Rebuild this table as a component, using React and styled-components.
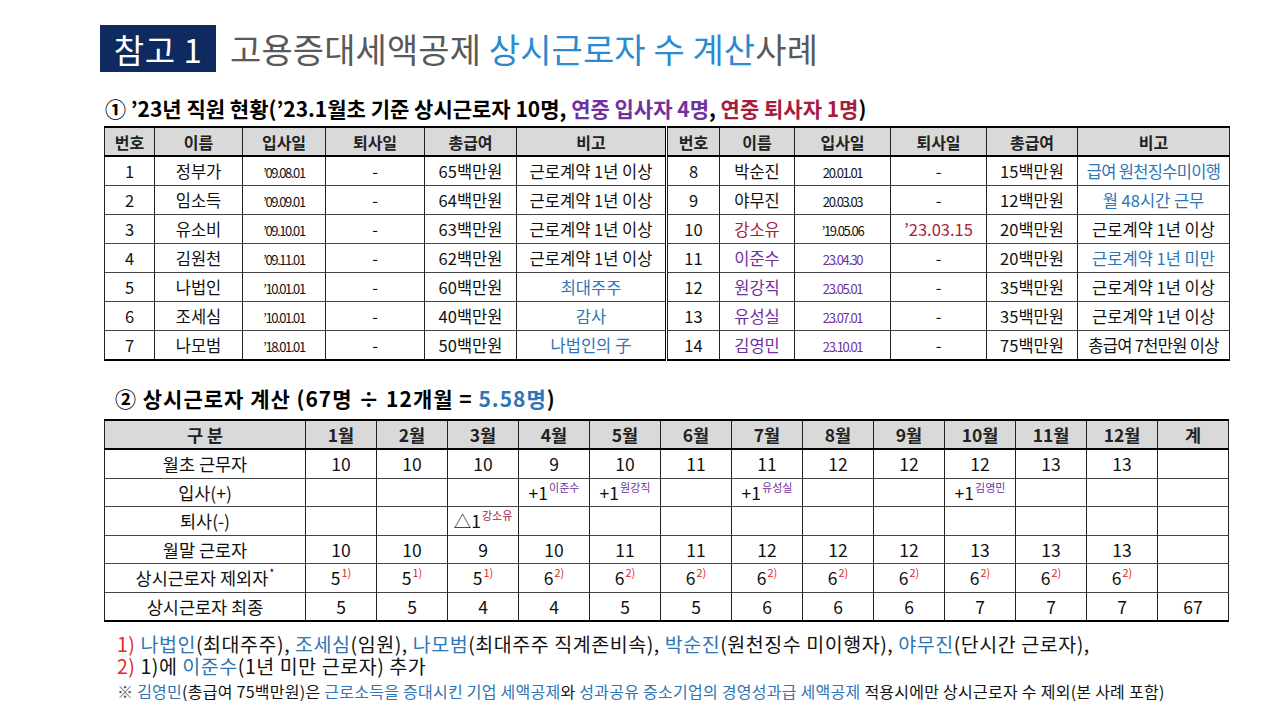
import React from 'react';
import styled, { createGlobalStyle } from 'styled-components';

const GlobalStyle = createGlobalStyle`
  html, body {
    margin: 0;
    padding: 0;
    background: #fff;
  }
  body {
    font-family: "Noto Sans CJK KR", "Noto Sans", sans-serif;
    color: #111;
  }
`;

const tones = {
  ink: '#111',
  gray: '#595959',
  sky: '#2b8ad0',
  blue: '#2e75b6',
  purple: '#7030a0',
  crimson: '#a61c3c',
  red: '#e3262b',
};

const Page = styled.div`
  width: 1280px;
  height: 720px;
  box-sizing: border-box;
  padding: 25px 0 0 100px;
  overflow: hidden;
`;

const TitleRow = styled.div`
  display: flex;
  align-items: center;
  gap: 14px;
  height: 47px;
`;

const TitleBadge = styled.div`
  width: 116px;
  height: 47px;
  display: flex;
  align-items: center;
  justify-content: center;
  background: #0e2a5f;
  color: #fff;
  font-size: 33px;
  letter-spacing: 0.5px;
`;

const TitleText = styled.h1`
  margin: 0;
  font-size: 34px;
  font-weight: 400;
  letter-spacing: 0.1px;
  color: ${tones.gray};
`;

const Tone = styled.span`
  color: ${p => tones[p.$c] || p.$c};
`;

const Heading = styled.h2`
  margin: ${p => p.$mt}px 0 0 ${p => p.$ml}px;
  font-size: 21px;
  font-weight: 700;
  line-height: 24px;
  color: #000;
  letter-spacing: ${p => p.$ls || 0}px;
`;

const TablePair = styled.div`
  display: flex;
  gap: 1px;
  margin: 6px 0 0 4px;
`;

const Sheet = styled.table`
  border-collapse: collapse;
  table-layout: fixed;
  width: ${p => p.$w}px;
  border-top: 2.5px solid #000;
  border-bottom: 2.5px solid #000;
  border-left: 1px solid #222;
  border-right: ${p => (p.$thickRight ? '1.5px solid #000' : '1px solid #222')};
`;

const HeadCell = styled.th`
  height: 27px;
  padding: 0;
  background: #d9d9d9;
  border-left: 1px solid #222;
  border-bottom: 2px solid #000;
  font-size: ${p => p.$size || 16}px;
  font-weight: ${p => (p.$bold ? 700 : 600)};
  color: #222;
  text-align: center;
  white-space: nowrap;
`;

const Cell = styled.td`
  height: ${p => p.$h || 28}px;
  padding: 0;
  border-left: 1px solid #222;
  border-top: 1px solid #444;
  font-size: ${p => p.$size || 16.5}px;
  line-height: 1;
  color: ${p => tones[p.$c] || tones.ink};
  text-align: center;
  white-space: nowrap;
`;

const DateText = styled.span`
  font-size: 13px;
  letter-spacing: -1.4px;
  color: ${p => tones[p.$c] || tones.ink};
`;

const Sup = styled.sup`
  font-size: 11px;
  line-height: 0;
  vertical-align: 0.7em;
  margin-left: 1px;
  color: ${p => tones[p.$c] || tones.ink};
`;

const MonthTable = styled(Sheet)`
  margin: 9px 0 0 4px;
`;

const Notes = styled.div`
  margin: 11px 0 0 17px;
`;

const NoteLine = styled.p`
  margin: 0;
  font-size: ${p => p.$size || 19.5}px;
  line-height: ${p => p.$lh || 22}px;
  letter-spacing: ${p => p.$ls ?? 0.55}px;
  margin-top: ${p => p.$mt || 0}px;
  color: #111;
`;

const NoteText = styled.span`
  letter-spacing: ${p => (p.$tight ? '-0.7px' : '0')};
`;

const leftCols = [50, 88, 83, 99, 92, 149];
const rightCols = [52, 75, 96, 96, 91, 152];
const headers = ['번호', '이름', '입사일', '퇴사일', '총급여', '비고'];

const staffLeft = [
  { no: 1, name: '정부가', join: '’09.08.01', pay: '65백만원', note: '근로계약 1년 이상' },
  { no: 2, name: '임소득', join: '’09.09.01', pay: '64백만원', note: '근로계약 1년 이상' },
  { no: 3, name: '유소비', join: '’09.10.01', pay: '63백만원', note: '근로계약 1년 이상' },
  { no: 4, name: '김원천', join: '’09.11.01', pay: '62백만원', note: '근로계약 1년 이상' },
  { no: 5, name: '나법인', join: '’10.01.01', pay: '60백만원', note: '최대주주', noteC: 'blue' },
  { no: 6, name: '조세심', join: '’10.01.01', pay: '40백만원', note: '감사', noteC: 'blue' },
  { no: 7, name: '나모범', join: '’18.01.01', pay: '50백만원', note: '나법인의 子', noteC: 'blue' },
];

const staffRight = [
  { no: 8, name: '박순진', join: '20.01.01', pay: '15백만원', note: '급여 원천징수미이행', noteC: 'blue', tight: true },
  { no: 9, name: '야무진', join: '20.03.03', pay: '12백만원', note: '월 48시간 근무', noteC: 'blue' },
  { no: 10, name: '강소유', nameC: 'crimson', join: '’19.05.06', out: '’23.03.15', pay: '20백만원', note: '근로계약 1년 이상' },
  { no: 11, name: '이준수', nameC: 'purple', join: '23.04.30', joinC: 'purple', pay: '20백만원', note: '근로계약 1년 미만', noteC: 'blue' },
  { no: 12, name: '원강직', nameC: 'purple', join: '23.05.01', joinC: 'purple', pay: '35백만원', note: '근로계약 1년 이상' },
  { no: 13, name: '유성실', nameC: 'purple', join: '23.07.01', joinC: 'purple', pay: '35백만원', note: '근로계약 1년 이상' },
  { no: 14, name: '김영민', nameC: 'purple', join: '23.10.01', joinC: 'purple', pay: '75백만원', note: '총급여 7천만원 이상', tight: true },
];

function StaffTable({ cols, rows, thickRight }) {
  const width = cols.reduce((a, b) => a + b, 0);
  return (
    <Sheet $w={width} $thickRight={thickRight}>
      <colgroup>
        {cols.map((w, i) => (
          <col key={i} style={{ width: w }} />
        ))}
      </colgroup>
      <thead>
        <tr>
          {headers.map(h => (
            <HeadCell key={h}>{h}</HeadCell>
          ))}
        </tr>
      </thead>
      <tbody>
        {rows.map(r => (
          <tr key={r.no}>
            <Cell>{r.no}</Cell>
            <Cell $c={r.nameC}>{r.name}</Cell>
            <Cell>
              <DateText $c={r.joinC}>{r.join}</DateText>
            </Cell>
            <Cell $c={r.out ? 'crimson' : undefined}>{r.out || '-'}</Cell>
            <Cell>{r.pay}</Cell>
            <Cell $c={r.noteC}>
              <NoteText $tight={r.tight}>{r.note}</NoteText>
            </Cell>
          </tr>
        ))}
      </tbody>
    </Sheet>
  );
}

const months = ['1월', '2월', '3월', '4월', '5월', '6월', '7월', '8월', '9월', '10월', '11월', '12월', '계'];
const monthCols = [201, ...Array(13).fill(71)];

const plus = name => ({ v: '+1', sup: name, c: 'purple' });
const minus = name => ({ v: '△1', sup: name, c: 'crimson' });
const ex = n => ({ v: n, sup: n === 5 ? '1)' : '2)', c: 'red' });

const monthRows = [
  { label: '월초 근무자', cells: [10, 10, 10, 9, 10, 11, 11, 12, 12, 12, 13, 13, ''] },
  {
    label: '입사(+)',
    cells: ['', '', '', plus('이준수'), plus('원강직'), '', plus('유성실'), '', '', plus('김영민'), '', '', ''],
  },
  { label: '퇴사(-)', cells: ['', '', minus('강소유'), '', '', '', '', '', '', '', '', '', ''] },
  { label: '월말 근로자', cells: [10, 10, 9, 10, 11, 11, 12, 12, 12, 13, 13, 13, ''] },
  {
    label: '상시근로자 제외자',
    star: true,
    cells: [5, 5, 5, 6, 6, 6, 6, 6, 6, 6, 6, 6].map(ex).concat(''),
  },
  { label: '상시근로자 최종', cells: [5, 5, 4, 4, 5, 5, 6, 6, 6, 7, 7, 7, 67] },
];

function MonthCell({ value }) {
  if (value && typeof value === 'object') {
    return (
      <Cell $h={27.5} $size={17.5}>
        {value.v}
        <Sup $c={value.c}>{value.sup}</Sup>
      </Cell>
    );
  }
  return (
    <Cell $h={27.5} $size={17.5}>
      {value}
    </Cell>
  );
}

function MonthlyTable() {
  return (
    <MonthTable $w={1124}>
      <colgroup>
        {monthCols.map((w, i) => (
          <col key={i} style={{ width: w }} />
        ))}
      </colgroup>
      <thead>
        <tr>
          <HeadCell $bold $size={17.5}>
            구 분
          </HeadCell>
          {months.map(m => (
            <HeadCell key={m} $bold $size={17.5}>
              {m}
            </HeadCell>
          ))}
        </tr>
      </thead>
      <tbody>
        {monthRows.map(r => (
          <tr key={r.label}>
            <Cell $h={27.5} $size={17.5}>
              {r.label}
              {r.star && <Sup $c="ink">*</Sup>}
            </Cell>
            {r.cells.map((c, i) => (
              <MonthCell key={i} value={c} />
            ))}
          </tr>
        ))}
      </tbody>
    </MonthTable>
  );
}

export default function App() {
  return (
    <>
      <GlobalStyle />
      <Page>
        <TitleRow>
          <TitleBadge>참고 1</TitleBadge>
          <TitleText>
            고용증대세액공제 <Tone $c="sky">상시근로자 수 계산</Tone>사례
          </TitleText>
        </TitleRow>

        <Heading $mt={24} $ml={5}>
          ① ’23년 직원 현황(’23.1월초 기준 상시근로자 10명, <Tone $c="purple">연중 입사자 4명</Tone>,{' '}
          <Tone $c="crimson">연중 퇴사자 1명</Tone>)
        </Heading>

        <TablePair>
          <StaffTable cols={leftCols} rows={staffLeft} thickRight />
          <StaffTable cols={rightCols} rows={staffRight} />
        </TablePair>

        <Heading $mt={25} $ml={15} $ls={1}>
          ② 상시근로자 계산 (67명 ÷ 12개월 = <Tone $c="blue">5.58명</Tone>)
        </Heading>

        <MonthlyTable />

        <Notes>
          <NoteLine>
            <Tone $c="red">1)</Tone> <Tone $c="blue">나법인</Tone>(최대주주), <Tone $c="blue">조세심</Tone>(임원),{' '}
            <Tone $c="blue">나모범</Tone>(최대주주 직계존비속), <Tone $c="blue">박순진</Tone>(원천징수 미이행자),{' '}
            <Tone $c="blue">야무진</Tone>(단시간 근로자),
          </NoteLine>
          <NoteLine>
            <Tone $c="red">2)</Tone> 1)에 <Tone $c="blue">이준수</Tone>(1년 미만 근로자) 추가
          </NoteLine>
          <NoteLine $size={16} $lh={20} $ls={0.26} $mt={4}>
            <Tone $c="gray">※</Tone> <Tone $c="blue">김영민</Tone>(총급여 75백만원)은{' '}
            <Tone $c="blue">근로소득을 증대시킨 기업 세액공제</Tone>와{' '}
            <Tone $c="blue">성과공유 중소기업의 경영성과급 세액공제</Tone> 적용시에만 상시근로자 수 제외(본 사례 포함)
          </NoteLine>
        </Notes>
      </Page>
    </>
  );
}
